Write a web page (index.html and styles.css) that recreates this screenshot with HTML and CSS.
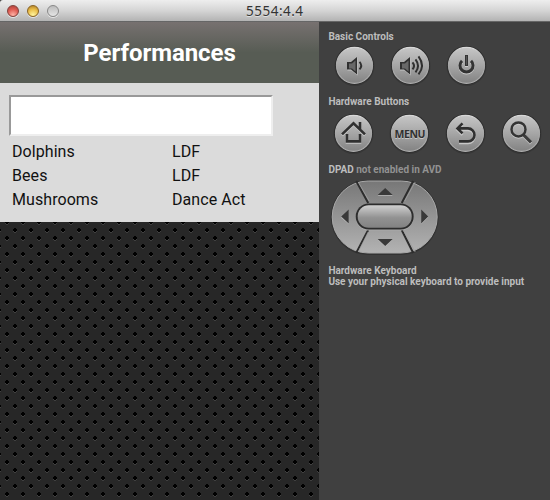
FILE: index.html
```html
<!DOCTYPE html>
<html lang="en">
<head>
<meta charset="utf-8">
<title>5554:4.4</title>
<link rel="stylesheet" href="styles.css">
</head>
<body>
<svg class="defs" width="0" height="0" aria-hidden="true">
  <defs>
    <linearGradient id="metal" x1="0" y1="0" x2="0" y2="1"><stop offset="0" stop-color="#c6c6c6"/><stop offset=".5" stop-color="#a6a6a6"/><stop offset="1" stop-color="#828282"/></linearGradient>
    <linearGradient id="rim" x1="0" y1="0" x2="0" y2="1"><stop offset="0" stop-color="#d8d8d8"/><stop offset=".5" stop-color="#a6a6a6"/><stop offset="1" stop-color="#acacac"/></linearGradient>
    <linearGradient id="pad" x1="0" y1="0" x2="0" y2="1"><stop offset="0" stop-color="#777"/><stop offset="1" stop-color="#b3b3b3"/></linearGradient>
    <linearGradient id="center" x1="0" y1="0" x2="0" y2="1"><stop offset="0" stop-color="#d0d0d0"/><stop offset=".55" stop-color="#929292"/><stop offset="1" stop-color="#828282"/></linearGradient>
    <symbol id="disc" viewBox="0 0 42 42"><circle cx="21" cy="21.500" r="20" fill="#373737"/><circle cx="21" cy="21" r="19.300" fill="#2c2c2c"/><circle cx="21" cy="21" r="18" fill="url(#metal)" stroke="url(#rim)" stroke-width="1.200"/></symbol>
  </defs>
</svg>
<header class="titlebar">
  <span class="light red"></span><span class="light yellow"></span><span class="light gray"></span>
  <span class="window-title">5554:4.4</span>
</header>
<div class="window">
  <main class="screen">
    <h1>Performances</h1>
    <section class="content">
      <input class="search" type="text" aria-label="Search">
      <div class="list">
        <span>Dolphins</span><span>LDF</span>
        <span>Bees</span><span>LDF</span>
        <span>Mushrooms</span><span>Dance Act</span>
      </div>
    </section>
    <svg class="mesh" width="319" height="278">
      <defs>
        <pattern id="dots" width="16" height="16" patternUnits="userSpaceOnUse">
          <rect width="16" height="16" fill="#272727"/>
          <path d="M5 1h4v1H8v1H6V2H5zM13 9h3v1h-1v1h-1v-1h-1zM14 10h2v1h-2zM0 9h1v1H0z" fill="#404040"/>
          <path d="M5 0h4v1H8v1H6V1H5zM5 15h4v1H5zM6 14h2v1H6zM13 7h3v2h-3zM0 7h1v2H0zM14 6h2v4h-2z" fill="#000"/>
        </pattern>
      </defs>
      <rect width="319" height="278" fill="url(#dots)"/>
    </svg>
  </main>
  <aside class="controls">
    <h2 class="basic">Basic Controls</h2>
    <div class="row first">
      <svg width="42" height="42"><use href="#disc" width="42" height="42"/><path d="M14 18.500h4l6-5V31l-6-5h-4z" fill="#c8c8c8"/><path d="M13.500 17.500h4l6-5V30l-6-5h-4z" fill="#303030"/><path d="M15.500 19h3l3.500-3v11l-3.500-3h-3z" fill="#686868"/><path d="M26 17.500q3.500 3.800 0 7.500" fill="none" stroke="#303030" stroke-width="1.900"/></svg>
      <svg width="42" height="42"><use href="#disc" width="42" height="42"/><path d="M10.500 18.500h4.500l6-5V31l-6-5h-4.500z" fill="#c4c4c4"/><path d="M10.500 17.500h4l6-5V30l-6-5h-4z" fill="#303030"/><path d="M12.500 19h3l3.500-3v11l-3.500-3h-3z" fill="#686868"/><path d="M23 18q3 3.500 0 7m3-10q5 6.500 0 13m3-16q7 9.500 0 18" fill="none" stroke="#303030" stroke-width="2"/></svg>
      <svg width="42" height="42"><use href="#disc" width="42" height="42"/><g fill="none" stroke-width="3"><path d="M16.500 17.500a6.500 6.500 0 1 0 9 0M21 11.500v11" stroke="#ccc"/><path d="M16.500 16.500a6.500 6.500 0 1 0 9 0M21 10.500v11" stroke="#333"/><path d="M21 11.500v9" stroke="#555" stroke-width="1"/></g></svg>
    </div>
    <h2 class="hardware">Hardware Buttons</h2>
    <div class="row second">
      <svg width="42" height="42"><use href="#disc" width="42" height="42"/><g fill="none" stroke-width="2.600"><path d="M9.500 23L21 12l11.500 11M27.500 18.500v-8M14.500 22.500V30h13v-7.500" stroke="#c8c8c8"/><path d="M9.500 22L21 11l11.500 11M27.500 17.500v-8M14.500 21.500V29h13v-7.500" stroke="#303030"/></g></svg>
      <svg width="42" height="42"><use href="#disc" width="42" height="42"/><text class="menu shine" x="21.500" y="26.500" textLength="31">MENU</text><text class="menu" x="21.500" y="25.500" textLength="31">MENU</text></svg>
      <svg width="42" height="42"><use href="#disc" width="42" height="42"/><g fill="none" stroke-width="2.600"><path d="M18 11.500L13 16.500l5 5M13.500 16.500h10a6.500 6.500 0 0 1 0 13H14.500" transform="translate(0 1)" stroke="#c8c8c8"/><path d="M18 11L13 16l5 5M13.500 16h10a6.500 6.500 0 0 1 0 13H14.500" stroke="#303030"/></g></svg>
      <svg width="42" height="42"><use href="#disc" width="42" height="42"/><g fill="none"><path d="M22.500 23l8 8" stroke="#c8c8c8" stroke-width="3"/><circle cx="18" cy="18" r="7" stroke="#c8c8c8" stroke-width="2.500"/><path d="M22.500 22l8 8" stroke="#3c3c3c" stroke-width="3"/><circle cx="18" cy="17" r="7" stroke="#343434" stroke-width="2.500"/></g></svg>
    </div>
    <h2 class="dpad-title">DPAD <span>not enabled in AVD</span></h2>
    <svg class="dpad" width="110" height="78">
      <rect x="1" y="2" width="108" height="75" rx="37.500" fill="#333"/>
      <rect x="2.500" y="3" width="105" height="72" rx="36" fill="url(#pad)" stroke="#a9a9a9"/>
      <path d="M26.500 3l12 22M83.500 3L72 25M26.500 75l12-23M83.500 75L72 52" stroke="#2d2d2d" stroke-width="2"/>
      <path d="M28.500 4l11 19M85.500 4L75 23M28.500 74l10-20M85.500 74L74 53" stroke="#a0a0a0" stroke-width=".8"/>
      <rect x="26" y="26" width="58" height="26.500" rx="13" fill="#aaa"/>
      <rect x="26" y="25.500" width="58" height="26" rx="13" fill="#2d2d2d"/>
      <rect x="28" y="27.300" width="54" height="22.500" rx="11" fill="url(#center)"/>
      <path d="M48 17h15l-7.500-7zM48 61h15l-7.500 7zM19 31.500v14L11.500 39zM91.500 31.500v14l7-7z" transform="translate(0 .8)" fill="#b8b8b8"/>
      <path d="M48 17h15l-7.500-7zM48 61h15l-7.500 7zM19 31.500v14l-7.500-7zM91.500 31.500v14l7-7z" fill="#393939"/>
    </svg>
    <h2 class="keyboard">Hardware Keyboard<br>Use your physical keyboard to provide input</h2>
  </aside>
</div>
</body>
</html>
```

FILE: styles.css
```css
* { box-sizing: border-box; }
body { margin: 0; width: 550px; height: 500px; overflow: hidden; background: #404040; font-family: Roboto, sans-serif; }
.defs { position: absolute; }
svg { display: block; }
.titlebar { display: flex; align-items: flex-start; height: 22px; padding: 5px 0 0 7px; gap: 8px; border-bottom: 1px solid #666; background: linear-gradient(#eee, #d5d5d5 50%, #b3b3b3); border-radius: 3px 0 0 0; }
.light { width: 12px; height: 12px; border-radius: 50%; border: 1px solid #777; box-shadow: 0 1px 0 #e5e5e5; }
.red { background: radial-gradient(circle at 50% 90%, #ffb4a8, #df5c53 55%, #a63d36); border-color: #81413c; }
.yellow { background: radial-gradient(circle at 50% 90%, #fff6a0, #eabe49 55%, #a87822); border-color: #896324; }
.gray { background: linear-gradient(#bcbcbc, #e5e5e5); border-color: #888; }
.window-title { margin: -1px 0 0 179px; font: 13.5px/15px "Noto Sans", sans-serif; letter-spacing: .5px; color: #333; text-shadow: 0 1px 0 #e3e3e3; }
.window { display: flex; height: 478px; }
.screen { width: 319px; flex: none; }
h1 { margin: 0; height: 61px; background: linear-gradient(#777170, #575c54 50%); color: #fff; font-size: 24px; line-height: 62px; font-weight: 700; text-align: center; letter-spacing: -.06px; }
.content { height: 139px; background: #dbdbdb; padding: 12px 9px 0; }
.search { display: block; width: 264px; height: 41px; margin: 0; background: #fff; border: 2px solid; border-color: #999 #eee #eee #999; border-radius: 0; outline: none; }
.list { display: grid; grid-template-columns: 160px 1fr; grid-auto-rows: 24px; padding: 3px 0 0 3px; font-size: 16px; line-height: 25px; letter-spacing: .07px; color: #111; }
.controls { width: 231px; padding-left: 9px; background: #404040; }
h2 { margin: 0; padding-left: .4px; color: #bdbdbd; font-size: 10px; line-height: 11px; font-weight: 700; white-space: nowrap; }
.basic { padding-top: 9px; }
.row { display: flex; gap: 14px; transform: translate(-.5px, .4px); }
.first { margin: 2px 0 0 6px; }
.hardware { margin-top: 10px; }
.second { margin: 5px 0 0 5px; }
.dpad-title { margin-top: 10px; }
.dpad-title span { color: #929292; }
.dpad { margin: 3px 0 0 2px; transform: translateX(-.3px); }
.keyboard { margin-top: 9px; }
.menu { font: 700 10.5px "Open Sans", sans-serif; text-anchor: middle; fill: #303030; }
.shine { fill: #c8c8c8; }
```
